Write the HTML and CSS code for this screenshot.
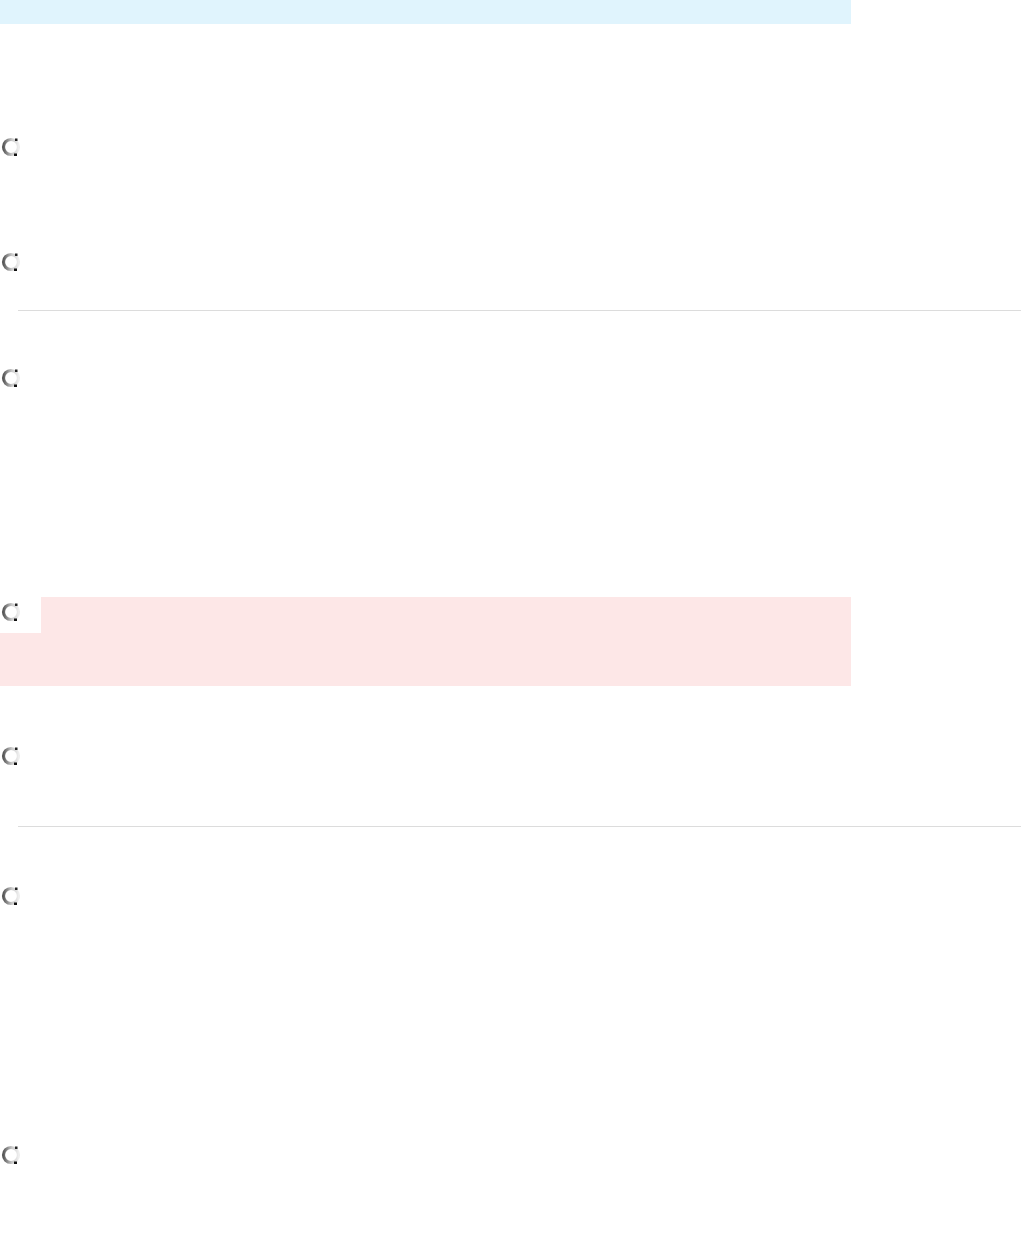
FILE: index.html
```html
<!DOCTYPE html>
<html>
<head>
<meta charset="utf-8">
<link rel="stylesheet" href="styles.css">
</head>
<body>
<div class="banner"></div>
<div class="row r1"><svg class="radio" viewBox="0 0 20 20" width="20" height="20"><defs><linearGradient id="g1" x1="0" y1="0" x2="1" y2="0"><stop offset="0" stop-color="#5a5a5a"/><stop offset="0.55" stop-color="#c8c8c8"/><stop offset="1" stop-color="#eeeeee"/></linearGradient></defs><circle cx="10" cy="10" r="7.5" fill="none" stroke="url(#g1)" stroke-width="3.2"/><rect x="14" y="1.5" width="2.5" height="2.5" fill="#222"/><rect x="13" y="16.5" width="3" height="2.5" fill="#111"/></svg></div>
<div class="row r2"><svg class="radio" viewBox="0 0 20 20" width="20" height="20"><circle cx="10" cy="10" r="7.5" fill="none" stroke="url(#g1)" stroke-width="3.2"/><rect x="14" y="1.5" width="2.5" height="2.5" fill="#222"/><rect x="13" y="16.5" width="3" height="2.5" fill="#111"/></svg></div>
<div class="rule r-a"></div>
<div class="row r3"><svg class="radio" viewBox="0 0 20 20" width="20" height="20"><circle cx="10" cy="10" r="7.5" fill="none" stroke="url(#g1)" stroke-width="3.2"/><rect x="14" y="1.5" width="2.5" height="2.5" fill="#222"/><rect x="13" y="16.5" width="3" height="2.5" fill="#111"/></svg></div>
<div class="alert">
  <div class="patch"><svg class="radio" viewBox="0 0 20 20" width="20" height="20"><circle cx="10" cy="10" r="7.5" fill="none" stroke="url(#g1)" stroke-width="3.2"/><rect x="14" y="1.5" width="2.5" height="2.5" fill="#222"/><rect x="13" y="16.5" width="3" height="2.5" fill="#111"/></svg></div>
</div>
<div class="row r5"><svg class="radio" viewBox="0 0 20 20" width="20" height="20"><circle cx="10" cy="10" r="7.5" fill="none" stroke="url(#g1)" stroke-width="3.2"/><rect x="14" y="1.5" width="2.5" height="2.5" fill="#222"/><rect x="13" y="16.5" width="3" height="2.5" fill="#111"/></svg></div>
<div class="rule r-b"></div>
<div class="row r6"><svg class="radio" viewBox="0 0 20 20" width="20" height="20"><circle cx="10" cy="10" r="7.5" fill="none" stroke="url(#g1)" stroke-width="3.2"/><rect x="14" y="1.5" width="2.5" height="2.5" fill="#222"/><rect x="13" y="16.5" width="3" height="2.5" fill="#111"/></svg></div>
<div class="row r7"><svg class="radio" viewBox="0 0 20 20" width="20" height="20"><circle cx="10" cy="10" r="7.5" fill="none" stroke="url(#g1)" stroke-width="3.2"/><rect x="14" y="1.5" width="2.5" height="2.5" fill="#222"/><rect x="13" y="16.5" width="3" height="2.5" fill="#111"/></svg></div>
</body>
</html>
```
FILE: styles.css
```css
html, body { margin: 0; padding: 0; background: #fff; }
body { width: 1021px; min-height: 1254px; font-family: "Liberation Sans", Arial, sans-serif; }
.banner { width: 851px; height: 24px; background: #e0f4fd; }
.row { height: 20px; display: flex; align-items: center; padding-left: 1px; }
.radio { display: block; }
.r1 { margin-top: 113px; }
.r2 { margin-top: 95px; }
.rule { height: 1px; background: #dcdcdc; margin-left: 18px; }
.r-a { margin-top: 38px; }
.r3 { margin-top: 57px; }
.alert { margin-top: 209px; width: 851px; height: 89px; background: #fde7e7; }
.patch { width: 41px; height: 36px; background: #fff; padding: 5px 0 0 1px; box-sizing: border-box; }
.r5 { margin-top: 60px; }
.r-b { margin-top: 60px; }
.r6 { margin-top: 59px; }
.r7 { margin-top: 239px; }
```
